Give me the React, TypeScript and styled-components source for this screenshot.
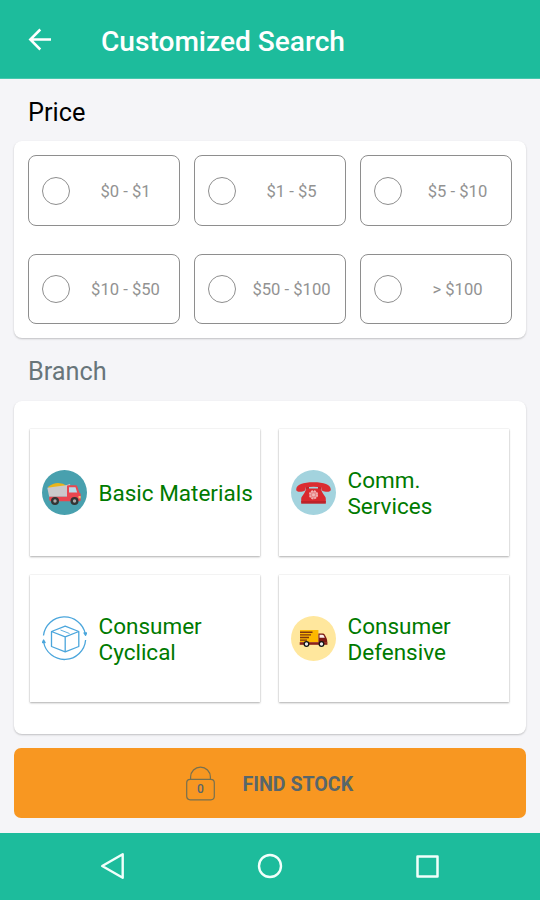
import React from "react";
import styled, { createGlobalStyle } from "styled-components";

const GlobalStyle = createGlobalStyle`
  *, *::before, *::after { box-sizing: border-box; }
  body { margin: 0; background: #f5f5f8; font-family: Roboto, sans-serif; }
  button { font: inherit; border: 0; padding: 0; margin: 0; background: none; text-align: left; }
  svg { display: block; flex: none; }
`;

const Screen = styled.div`
  width: 540px;
  height: 900px;
  display: flex;
  flex-direction: column;
  background: #f5f5f8;
  overflow: hidden;
`;

const Header = styled.header`
  height: 79px;
  flex: none;
  display: flex;
  align-items: center;
  gap: 48px;
  padding: 1px 0 0 27px;
  background: #1dbc9c;
  border-bottom: 1px solid #47c8ae;
  color: #fff;
`;

const Title = styled.h1`
  margin: 4px 0 0;
  font-size: 28.1px;
  line-height: 32px;
  font-weight: 500;
`;

const Content = styled.main`
  flex: 1;
  display: flex;
  flex-direction: column;
  padding: 0 14px;
`;

const Heading = styled.h2<{ $muted?: boolean }>`
  margin: 0;
  height: ${(p) => (p.$muted ? 63 : 62)}px;
  padding: 4px 0 0 14px;
  display: flex;
  align-items: center;
  font-size: 25.3px;
  font-weight: 400;
  color: ${(p) => (p.$muted ? "#68757a" : "#000")};
`;

const Card = styled.section`
  background: #fff;
  border-radius: 8px;
  box-shadow: 0 1px 2px rgba(0, 0, 0, 0.22);
`;

const PriceCard = styled(Card)`
  height: 197px;
  padding: 14px;
  display: grid;
  grid-template-columns: repeat(3, 152px);
  grid-template-rows: 71px 70px;
  gap: 28px 14px;
`;

const Option = styled.button`
  display: flex;
  align-items: center;
  padding-left: 13px;
  border: 1.4px solid #8e8e8e;
  border-radius: 8px;
`;

const Radio = styled.span`
  width: 28px;
  height: 28px;
  flex: none;
  border: 1.4px solid #8e8e8e;
  border-radius: 50%;
`;

const OptionLabel = styled.span`
  flex: 1;
  padding: 2px 0 0 2px;
  text-align: center;
  font-size: 16.6px;
  line-height: 20px;
  color: #929292;
  white-space: nowrap;
`;

const BranchCard = styled(Card)`
  height: 333px;
  padding: 28px 16.4px;
  display: grid;
  grid-template-columns: 230px 230px;
  grid-auto-rows: 127px;
  gap: 19px;
`;

const Tile = styled.button`
  display: flex;
  align-items: center;
  gap: 11.5px;
  padding-left: 11.6px;
  background: #fff;
  box-shadow: 0 1px 2px rgba(0, 0, 0, 0.3), 0 0 1px rgba(0, 0, 0, 0.16);
`;

const TileLabel = styled.span`
  padding-top: 1px;
  font-size: 22.5px;
  line-height: 26.5px;
  color: #007a00;
  white-space: pre-line;
`;

const FindButton = styled.button`
  height: 70px;
  margin-top: 14px;
  display: flex;
  align-items: center;
  padding-left: 172px;
  gap: 27.5px;
  border-radius: 7px;
  background: #f89721;
  color: #57666b;
  font-size: 19.6px;
  font-weight: 700;
`;

const FindLabel = styled.span`
  padding-top: 3px;
`;

const Lock = styled.span`
  width: 29px;
  height: 35px;
  display: grid;
  grid-template: 1fr / 1fr;
  & > * { grid-area: 1 / 1; }
`;

const LockCount = styled.span`
  align-self: end;
  justify-self: center;
  font-size: 12px;
  line-height: 14px;
  padding-bottom: 5px;
  box-sizing: content-box;
  font-weight: 500;
`;

const SystemBar = styled.nav`
  height: 67px;
  flex: none;
  display: flex;
  justify-content: space-between;
  align-items: center;
  padding: 0 100px 1px;
  background: #1dbc9c;
`;

const BackArrow = () => (
  <svg width="26" height="26" viewBox="0 0 26 26" fill="none" stroke="#fff" strokeWidth="2.5">
    <path d="M24 12.500H3M13.300 2.500 3.300 12.500l10 10" />
  </svg>
);

const DumpTruck = () => (
  <svg width="45" height="45" viewBox="0 0 45 45">
    <circle cx="22.5" cy="22.5" r="22.5" fill="#48a0ae" />
    <path d="M6 17q5-4 10-4 5 0 9 3l-2 3H7z" fill="#eab51b" />
    <path d="M5.300 17.800 24 15.200l3.800-1.200.6 1-2.400 1.500v10.200H7.200z" fill="#cbc9cb" />
    <path d="M7.200 26.700H25V16.300q0-1 1-1h7.800q1 0 1.400 1l2.100 6.300q1.400.3 1.400 2v5.600q0 1-1 1H9q-1.500 0-1.800-1.500z" fill="#e94750" />
    <path d="M27 17.200h6.500l1.700 5.400H27z" fill="#b8dbe8" />
    <path d="M36.500 26h2.200v2.400h-2.200z" fill="#f4bd72" />
    <circle cx="13" cy="31" r="4" fill="#333" />
    <circle cx="32.500" cy="31" r="4" fill="#333" />
    <circle cx="13" cy="31" r="1.700" fill="#aaa" />
    <circle cx="32.500" cy="31" r="1.700" fill="#aaa" />
  </svg>
);

const Telephone = () => (
  <svg width="45" height="45" viewBox="0 0 45 45">
    <circle cx="22.500" cy="22.500" r="22.500" fill="#a3d3de" />
    <path d="M15 14.500h3v5h-3zM27 14.500h3v5h-3z" fill="#b9252b" />
    <path d="M15.500 18.500h14q1.800 4.500 4.500 8 .8 1 .8 2.400v3.700H10.200v-3.700q0-1.400.8-2.400 2.800-3.500 4.500-8z" fill="#d9292e" />
    <path d="M10.200 31h24.600v2.700H10.200z" fill="#bd2229" />
    <path d="M5.200 19.500c0-5 7-7.300 17.300-7.300s17.300 2.300 17.300 7.300c0 2.600-3.500 2.600-6.300 2.100-3-.5-3.200-1.700-3.200-4-5-1.200-10.600-1.200-15.600 0 0 2.300-.2 3.500-3.200 4-2.800.5-6.300.5-6.300-2.100z" fill="#db2c31" />
    <circle cx="22.500" cy="24.800" r="3.700" fill="#e88588" stroke="#f0b0b2" strokeWidth="1.800" strokeDasharray="2 .9" />
    <circle cx="22.500" cy="24.800" r="1.500" fill="#f0b8b9" />
  </svg>
);

const BoxCycle = () => (
  <svg width="45" height="45" viewBox="0 0 45 45" fill="none" stroke="#4ba6dc" strokeWidth="1.300" strokeLinejoin="round">
    <path d="M1.500 19.500A21.200 21.200 0 0 1 43.300 17.800M43.600 24A21.200 21.200 0 0 1 1.600 26" />
    <path d="M42 17h2.600l-1 2.300zM.5 26.500h2.600L1.600 24z" fill="#369bd8" />
    <path d="m23.200 10.200 13.600 5.300v15l-13.600 5.300-13.700-5.300v-15zM9.500 15.500l13.700 5.300 13.600-5.300M23.200 20.800v15" />
    <path d="m18.500 14 9 3.500" strokeWidth=".9" />
  </svg>
);

const DeliveryTruck = () => (
  <svg width="45" height="45" viewBox="0 0 45 45">
    <circle cx="22.500" cy="22.500" r="22.500" fill="#ffe79d" />
    <path d="M9 14h18.400v12.200H9z" fill="#fdb700" />
    <path d="M9 16.200h12.500M9 18.900h11M9 21.500h9M9 24.100h7" stroke="#7d3510" strokeWidth="1.400" />
    <path d="M27.400 17.400h4.400q1.300 0 2 1.300l1.700 3.300q.8 1.500.8 4.500h-8.900z" fill="#7b1914" />
    <path d="M28.500 18.700h2.700q1 0 1.500.9l1.100 2.200h-5.300z" fill="#f8eee9" />
    <path d="M8.700 26.200h27.700v2.600H8.700z" fill="#8b211b" />
    <circle cx="15.500" cy="28" r="2.300" fill="#eee" stroke="#151515" strokeWidth="1.300" />
    <circle cx="30.500" cy="28" r="2.300" fill="#eee" stroke="#151515" strokeWidth="1.300" />
  </svg>
);

const Padlock = () => (
  <svg width="29" height="35" viewBox="0 0 29 35" fill="none" stroke="#77704f" strokeWidth="1.200">
    <rect x=".7" y="13.400" width="27.600" height="20.400" rx="3.500" />
    <path d="M4.600 13.400V11a9.900 9.900 0 0 1 19.800 0v2.400" />
  </svg>
);

const NavBack = () => (
  <svg width="25" height="28" viewBox="0 0 25 28" fill="none" stroke="#f1fffb" strokeWidth="2.400" strokeLinejoin="round">
    <path d="M22.700 2.200v23.600L2.200 14z" />
  </svg>
);

const NavHome = () => (
  <svg width="26" height="26" viewBox="0 0 26 26" fill="none" stroke="#f1fffb" strokeWidth="2.400">
    <circle cx="13" cy="13" r="11" />
  </svg>
);

const NavRecent = () => (
  <svg width="25" height="25" viewBox="0 0 25 25" fill="none" stroke="#f1fffb" strokeWidth="2.500" strokeLinejoin="round">
    <path d="M2.500 2.500h20v20h-20z" />
  </svg>
);

const prices = ["$0 - $1", "$1 - $5", "$5 - $10", "$10 - $50", "$50 - $100", "> $100"];

const branches = [
  { label: "Basic Materials", Icon: DumpTruck },
  { label: "Comm.\nServices", Icon: Telephone },
  { label: "Consumer\nCyclical", Icon: BoxCycle },
  { label: "Consumer\nDefensive", Icon: DeliveryTruck },
];

export default function App() {
  return (
    <>
      <GlobalStyle />
      <Screen>
        <Header>
          <BackArrow />
          <Title>Customized Search</Title>
        </Header>
        <Content>
          <Heading>Price</Heading>
          <PriceCard>
            {prices.map((price) => (
              <Option key={price}>
                <Radio />
                <OptionLabel>{price}</OptionLabel>
              </Option>
            ))}
          </PriceCard>
          <Heading $muted>Branch</Heading>
          <BranchCard>
            {branches.map(({ label, Icon }) => (
              <Tile key={label}>
                <Icon />
                <TileLabel>{label}</TileLabel>
              </Tile>
            ))}
          </BranchCard>
          <FindButton>
            <Lock>
              <Padlock />
              <LockCount>0</LockCount>
            </Lock>
            <FindLabel>FIND STOCK</FindLabel>
          </FindButton>
        </Content>
        <SystemBar>
          <NavBack />
          <NavHome />
          <NavRecent />
        </SystemBar>
      </Screen>
    </>
  );
}
